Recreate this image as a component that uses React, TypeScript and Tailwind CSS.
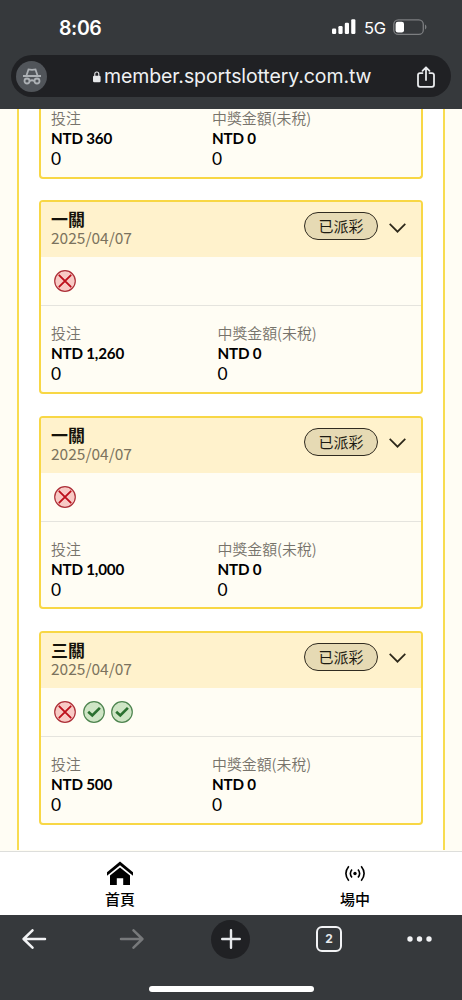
type Result = "win" | "lose";

interface Bet {
  id: number;
  title: string;
  results: Result[];
  stake: string;
  wide?: boolean;
}

const BETS: Bet[] = [
  { id: 1, title: "一關", results: ["lose"], stake: "NTD 1,260", wide: true },
  { id: 2, title: "一關", results: ["lose"], stake: "NTD 1,000", wide: true },
  { id: 3, title: "三關", results: ["lose", "win", "win"], stake: "NTD 500" },
];

function ResultIcon({ result }: { result: Result }) {
  if (result === "win") {
    return (
      <svg viewBox="0 0 22 22" className="size-[22px]" fill="none">
        <circle cx="11" cy="11" r="10.3" fill="#cfe5c5" stroke="#4f8550" strokeWidth="1.2" />
        <path d="M5.2 10.7 9.3 14.5 16.9 6.9" stroke="#2b7030" strokeWidth="2.7" />
      </svg>
    );
  }
  return (
    <svg viewBox="0 0 22 22" className="size-[22px]" fill="none">
      <circle cx="11" cy="11" r="10.3" fill="#f8cac5" stroke="#ad3039" strokeWidth="1.2" />
      <path d="M5.3 5.3 16.7 16.7M16.7 5.3 5.3 16.7" stroke="#bd101c" strokeWidth="1.9" strokeLinecap="round" />
    </svg>
  );
}

function Amount({ label, value }: { label: string; value: string }) {
  return (
    <div className="whitespace-nowrap">
      <p className="h-5 text-[14.9px] leading-[19px] font-[350] text-[#77736b]">{label}</p>
      <p className="h-5 font-[Lato,sans-serif] text-[15.2px] leading-[21px] font-bold tracking-[-0.2px] text-black">
        {value}
      </p>
      <p className="h-5 font-[Lato,sans-serif] text-[17.4px] leading-[21px] text-black">0</p>
    </div>
  );
}

function Amounts({ stake, wide }: { stake: string; wide?: boolean }) {
  return (
    <div className={wide ? "grid grid-cols-[166.5px_1fr] pl-2.5" : "grid grid-cols-[161px_1fr] pl-2.5"}>
      <Amount label="投注" value={stake} />
      <Amount label="中獎金額(未稅)" value="NTD 0" />
    </div>
  );
}

function BetCard({ bet }: { bet: Bet }) {
  return (
    <section className="h-[193.7px] shrink-0 overflow-hidden rounded-[4px] border-2 border-[#f8d745] bg-[#fffdf4]">
      <header className="flex h-[55px] items-start bg-[#fff2cc] pr-[15px] pl-2.5">
        <div className="pt-2">
          <h2 className="text-[17px] leading-[18px] font-bold text-[#15120a]">{bet.title}</h2>
          <p className="text-[15.5px] leading-[18px] text-[#7b735e]">2025/04/07</p>
        </div>
        <div className="mt-[10px] ml-auto flex items-center gap-[11px]">
          <span className="flex h-[28px] w-[74px] items-center justify-center rounded-full border-[1.3px] border-[#302b20] bg-[#e6dab4] pb-px text-[15px] leading-none text-[#1d1a12]">
            已派彩
          </span>
          <svg viewBox="0 0 17 10" className="mt-[3px] h-2.5 w-[17px]" fill="none" stroke="#2d281a" strokeWidth="1.7">
            <path d="m.7.9 7.8 7.8L16.3.9" />
          </svg>
        </div>
      </header>
      <div className="flex h-[49px] items-center gap-[6.5px] border-b border-[#e5e4de] pl-[13px]">
        {bet.results.map((r, i) => (
          <ResultIcon key={i} result={r} />
        ))}
      </div>
      <div className="pt-[17px]">
        <Amounts stake={bet.stake} wide={bet.wide} />
      </div>
    </section>
  );
}

function BrowserTop() {
  return (
    <header className="h-[109px] shrink-0 bg-[#36393c] font-[Inter,sans-serif] text-white">
      <div className="flex h-[55px] items-start justify-between pt-[15px] pr-[35px] pl-[59px]">
        <span className="text-[19.5px] leading-[26px] font-semibold tracking-[-0.4px]">8:06</span>
        <div className="flex h-6 items-center">
          <svg viewBox="0 0 24 16" className="h-4 w-6" fill="white">
            <rect y="9.5" width="4.2" height="5.5" rx="1.2" />
            <rect x="6.4" y="7" width="4.2" height="8" rx="1.2" />
            <rect x="12.8" y="3.8" width="4.2" height="11.2" rx="1.2" />
            <rect x="19.2" y=".3" width="4.2" height="14.7" rx="1.2" />
          </svg>
          <span className="mt-0.5 ml-2 w-[21px] text-[16.5px] leading-5 tracking-[-0.4px]">5G</span>
          <svg viewBox="0 0 34 17" className="mt-px ml-2 h-[17px] w-[34px]" fill="none">
            <rect x=".8" y=".8" width="29.5" height="14.6" rx="4.5" stroke="#7c7e80" strokeWidth="1.3" />
            <rect x="2.6" y="2.7" width="8.4" height="10.8" rx="2.3" fill="white" />
            <path d="M32 5.6c1.9.7 1.9 4.3 0 5z" fill="#7c7e80" />
          </svg>
        </div>
      </div>
      <div className="mx-[11px] flex h-[42px] items-center rounded-full bg-[#202124] pr-[16px] pl-[5px]">
        <span className="flex size-[31px] items-center justify-center rounded-full bg-[#51555a]">
          <svg viewBox="0 0 20 17" className="h-[17px] w-5" fill="none" stroke="#adb1b5" strokeWidth="1.8">
            <path d="M1 8h18M4.4 7.7 6.5 1.4l3.5.5 3.5-.5 2.1 6.3M7.8 13q2.2-1.5 4.4 0" />
            <circle cx="5" cy="13" r="2.5" />
            <circle cx="15" cy="13" r="2.5" />
          </svg>
        </span>
        <svg viewBox="0 0 8 12" className="mt-px ml-[46px] h-3 w-2">
          <rect y="4.8" width="7.6" height="6.5" rx="1.3" fill="#e7e8ea" />
          <path d="M1.8 5V3a2 2 0 0 1 4 0v2" fill="none" stroke="#e7e8ea" strokeWidth="1.1" />
        </svg>
        <span className="ml-[3px] text-[19.5px] leading-6 tracking-[-0.1px] whitespace-nowrap text-[#eff1f3]">
          member.sportslottery.com.tw
        </span>
        <svg
          viewBox="0 0 18 22"
          className="mt-0.5 ml-auto h-[22px] w-[18px] shrink-0"
          fill="none"
          stroke="#e8eaed"
          strokeWidth="1.8"
          strokeLinecap="round"
          strokeLinejoin="round"
        >
          <path d="M5.5 7.1H3A2 2 0 0 0 1 9.1v9.7a2 2 0 0 0 2 2h12a2 2 0 0 0 2-2V9.1a2 2 0 0 0-2-2h-2.5M9 14V1.5M5.5 4.8 9 1.3l3.5 3.5" />
        </svg>
      </div>
    </header>
  );
}

function SiteNav() {
  return (
    <nav className="grid h-[64px] shrink-0 grid-cols-[240px_1fr] border-t border-[#dddedb] bg-white text-[15px] font-medium text-black">
      <a className="flex flex-col items-center pt-[9px]">
        <svg viewBox="0 0 26 24" className="h-6 w-[26px]">
          <path d="M0 11.3 13 .5l13 10.8v3.5L13 4.2 0 14.8z" />
          <path d="M3 14.6 13 6.4l10 8.2v9.3h-6.8v-6.7H9.8v6.7H3z" />
        </svg>
        <span className="mt-[4px] leading-5">首頁</span>
      </a>
      <a className="flex flex-col items-center pt-[13px] pl-[8px]">
        <svg viewBox="0 0 20 17" className="h-[17px] w-5" fill="none" stroke="black" strokeWidth="1.6">
          <path d="M3.8 1.2q-5.8 7.3 0 14.6M16.2 1.2q5.8 7.3 0 14.6M7 4.4q-3.3 4.1 0 8.2M13 4.4q3.3 4.1 0 8.2" />
          <circle cx="10" cy="8.5" r="1.7" fill="black" stroke="none" />
        </svg>
        <span className="mt-[7px] leading-5">場中</span>
      </a>
    </nav>
  );
}

function BrowserBottom() {
  return (
    <footer className="h-[85px] shrink-0 bg-[#36393c] pt-[4px]">
      <div className="flex h-[40px] items-center justify-between pr-[30px] pl-[22px]">
        <svg viewBox="0 0 25 20" className="h-5 w-[25px]" fill="none" stroke="#f2f3f5" strokeWidth="2.5" strokeLinecap="round" strokeLinejoin="round">
          <path d="M23 10H1.8M10.5 1.3 1.6 10l8.9 8.7" />
        </svg>
        <svg viewBox="0 0 25 20" className="ml-[15px] h-5 w-[25px]" fill="none" stroke="#77797b" strokeWidth="2.5" strokeLinecap="round" strokeLinejoin="round">
          <path d="M2 10h21.2M14.5 1.3l8.9 8.7-8.9 8.7" />
        </svg>
        <span className="ml-[10px] flex size-[39px] items-center justify-center rounded-full bg-[#202124]">
          <svg viewBox="0 0 20 20" className="size-5" stroke="#e8eaed" strokeWidth="2.4" strokeLinecap="round">
            <path d="M10 1.2v17.6M1.2 10h17.6" />
          </svg>
        </span>
        <span className="ml-[9px] flex size-[26px] items-center justify-center rounded-[6px] border-2 border-[#f2f3f5] font-[Inter,sans-serif] text-[12px] leading-none font-bold text-[#e8eaed]">
          2
        </span>
        <svg viewBox="0 0 25 6" className="ml-[8px] h-1.5 w-[25px]" fill="#f2f3f5">
          <circle cx="3" cy="3" r="2.7" />
          <circle cx="12.5" cy="3" r="2.7" />
          <circle cx="22" cy="3" r="2.7" />
        </svg>
      </div>
      <div className="mx-auto mt-[27px] h-[5.5px] w-[165px] rounded-full bg-white" />
    </footer>
  );
}

export default function App() {
  return (
    <div className="flex h-[1000px] w-[462px] flex-col overflow-hidden bg-white font-['Noto_Sans_CJK_TC',sans-serif]">
      <BrowserTop />
      <main className="h-[742px] shrink-0 overflow-hidden bg-[#fffdf4]">
        <div className="mx-[17px] flex h-[740.5px] flex-col gap-[21.6px] border-x-[2.5px] border-[#f8dc50] bg-white px-5">
          <section className="h-[69.8px] shrink-0 rounded-b-[4px] border-2 border-t-0 border-[#f8d745] bg-[#fffdf4]">
            <div className="-mt-px">
              <Amounts stake="NTD 360" />
            </div>
          </section>
          {BETS.map((bet) => (
            <BetCard key={bet.id} bet={bet} />
          ))}
        </div>
      </main>
      <SiteNav />
      <BrowserBottom />
    </div>
  );
}
